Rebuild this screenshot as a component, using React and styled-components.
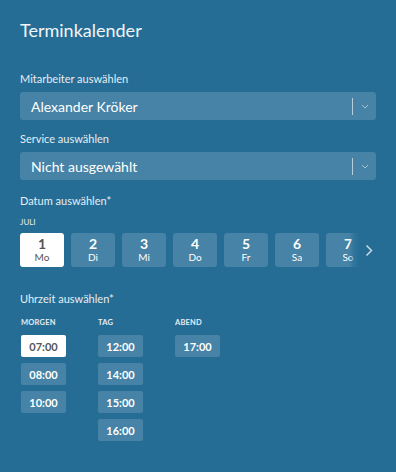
import React from "react";
import styled, { createGlobalStyle } from "styled-components";

const GlobalStyle = createGlobalStyle`
  html, body {
    margin: 0;
    padding: 0;
    background: #256d95;
  }
  body {
    font-family: Lato, "Open Sans", sans-serif;
    color: #fff;
  }
`;

const Page = styled.div`
  width: 396px;
  min-height: 472px;
  box-sizing: border-box;
  padding: 18px 20px 0 20px;
  background: #256d95;
`;

const Title = styled.h1`
  margin: 0 0 30px 0;
  font-size: 18px;
  font-weight: 400;
  line-height: 24px;
  color: #f2f6f9;
`;

const Label = styled.div`
  font-size: 11px;
  line-height: 14px;
  color: #e6eef4;
  margin-bottom: 6px;
`;

const Field = styled.div`
  margin-bottom: ${(p) => p.$mb || 12}px;
`;

const Select = styled.div`
  height: 28px;
  border-radius: 3px;
  background: #4683a6;
  display: flex;
  align-items: center;
  padding-left: 11px;
  font-size: 14px;
  color: #fff;
`;

const SelectText = styled.span`
  flex: 1;
`;

const Divider = styled.span`
  width: 1px;
  height: 17px;
  background: #b9cedb;
`;

const Chevron = styled.span`
  width: 23px;
  display: flex;
  justify-content: center;
  color: #a8c3d4;
`;

const Month = styled.div`
  font-size: 8px;
  line-height: 10px;
  color: #e6eef4;
  margin: 9px 0 6px 0;
`;

const DaysWrap = styled.div`
  position: relative;
  display: flex;
  gap: 7px;
  overflow: hidden;
  margin-bottom: 25px;
`;

const Day = styled.div`
  flex: 0 0 44px;
  height: 34px;
  border-radius: 3px;
  background: ${(p) => (p.$active ? "#fff" : "#4683a6")};
  color: ${(p) => (p.$active ? "#555" : "#fff")};
  display: flex;
  flex-direction: column;
  align-items: center;
  justify-content: center;
`;

const DayNum = styled.span`
  font-size: 14px;
  font-weight: 700;
  line-height: 15px;
`;

const DayName = styled.span`
  font-size: 10px;
  line-height: 13px;
`;

const Fade = styled.div`
  position: absolute;
  right: 0;
  top: 0;
  bottom: 0;
  width: 24px;
  background: linear-gradient(
    to right,
    rgba(37, 109, 149, 0) 0%,
    rgba(37, 109, 149, 0.7) 20%,
    #256d95 40%
  );
  display: flex;
  align-items: center;
  justify-content: flex-end;
  padding-right: 3px;
  color: #c8d9e4;
`;

const Slots = styled.div`
  display: flex;
  margin-top: 12px;
`;

const SlotCol = styled.div`
  width: 77px;
  display: flex;
  flex-direction: column;
  gap: 6px;
`;

const SlotHead = styled.div`
  font-size: 7.5px;
  font-weight: 700;
  letter-spacing: 0.2px;
  color: #e6eef4;
  padding-left: 1px;
  margin-bottom: 1px;
  line-height: 10px;
`;

const Slot = styled.div`
  width: 45px;
  height: 22px;
  border-radius: 2px;
  background: ${(p) => (p.$active ? "#fff" : "#4683a6")};
  color: ${(p) => (p.$active ? "#555" : "#fff")};
  display: flex;
  align-items: center;
  justify-content: center;
  font-size: 11px;
  font-weight: 700;
  margin-left: 1px;
`;

const days = [
  ["1", "Mo"],
  ["2", "Di"],
  ["3", "Mi"],
  ["4", "Do"],
  ["5", "Fr"],
  ["6", "Sa"],
  ["7", "So"],
];

const slots = [
  ["MORGEN", ["07:00", "08:00", "10:00"]],
  ["TAG", ["12:00", "14:00", "15:00", "16:00"]],
  ["ABEND", ["17:00"]],
];

const Down = () => (
  <svg width="8" height="5" viewBox="0 0 8 5" fill="none">
    <path d="M1 1l3 3 3-3" stroke="currentColor" strokeWidth="1" />
  </svg>
);

const Right = () => (
  <svg width="8" height="13" viewBox="0 0 8 13" fill="none">
    <path d="M1.5 1.5l5 5-5 5" stroke="currentColor" strokeWidth="1.5" />
  </svg>
);

const App = () => {
  return (
    <Page>
      <GlobalStyle />
      <Title>Terminkalender</Title>

      <Field>
        <Label>Mitarbeiter auswählen</Label>
        <Select>
          <SelectText>Alexander Kröker</SelectText>
          <Divider />
          <Chevron>
            <Down />
          </Chevron>
        </Select>
      </Field>

      <Field $mb={14}>
        <Label>Service auswählen</Label>
        <Select>
          <SelectText>Nicht ausgewählt</SelectText>
          <Divider />
          <Chevron>
            <Down />
          </Chevron>
        </Select>
      </Field>

      <Label>Datum auswählen*</Label>
      <Month>JULI</Month>
      <DaysWrap>
        {days.map(([n, d], i) => (
          <Day key={i} $active={i === 0}>
            <DayNum>{n}</DayNum>
            <DayName>{d}</DayName>
          </Day>
        ))}
        <Fade>
          <Right />
        </Fade>
      </DaysWrap>

      <Label>Uhrzeit auswählen*</Label>
      <Slots>
        {slots.map(([head, times]) => (
          <SlotCol key={head}>
            <SlotHead>{head}</SlotHead>
            {times.map((t) => (
              <Slot key={t} $active={t === "07:00"}>
                {t}
              </Slot>
            ))}
          </SlotCol>
        ))}
      </Slots>
    </Page>
  );
};

export default App;
